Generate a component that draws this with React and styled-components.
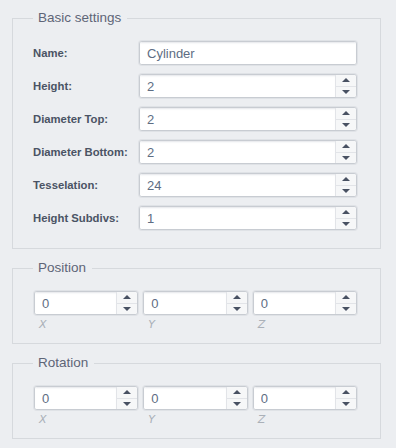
import React from "react";
import styled, { createGlobalStyle } from "styled-components";

const GlobalStyle = createGlobalStyle`
  html, body {
    margin: 0;
    padding: 0;
    background: #eceef1;
    font-family: "Liberation Sans", Arial, sans-serif;
  }
`;

const basicFields = [
  { label: "Name:", value: "Cylinder", spin: false },
  { label: "Height:", value: "2", spin: true },
  { label: "Diameter Top:", value: "2", spin: true },
  { label: "Diameter Bottom:", value: "2", spin: true },
  { label: "Tesselation:", value: "24", spin: true },
  { label: "Height Subdivs:", value: "1", spin: true },
];

const SpinBox = ({ value, spin = true }) => (
  <Box>
    <Field defaultValue={value} />
    {spin && (
      <Spinner>
        <SpinButton>
          <Arrow up />
        </SpinButton>
        <SpinButton>
          <Arrow />
        </SpinButton>
      </Spinner>
    )}
  </Box>
);

const VectorGroup = ({ title }) => (
  <Group>
    <Legend>{title}</Legend>
    <Triple>
      {["X", "Y", "Z"].map((axis) => (
        <Axis key={axis}>
          <SpinBox value="0" />
          <AxisLabel>{axis}</AxisLabel>
        </Axis>
      ))}
    </Triple>
  </Group>
);

const App = () => {
  return (
    <Page>
      <GlobalStyle />
      <Group>
        <Legend>Basic settings</Legend>
        <Rows>
          {basicFields.map((f) => (
            <Row key={f.label}>
              <Label>{f.label}</Label>
              <SpinBox value={f.value} spin={f.spin} />
            </Row>
          ))}
        </Rows>
      </Group>
      <VectorGroup title="Position" />
      <VectorGroup title="Rotation" />
    </Page>
  );
};

export default App;

const Page = styled.div`
  width: 396px;
  height: 448px;
  box-sizing: border-box;
  padding: 9px 15px 0 12px;
  display: flex;
  flex-direction: column;
  gap: 10px;
`;

const Group = styled.fieldset`
  margin: 0;
  border: 1px solid #d6d9dd;
  padding: 14px 23px 18px 20px;
  min-width: 0;
`;

const Legend = styled.legend`
  padding: 0 6px 0 5px;
  font-size: 13.5px;
  line-height: 18px;
  color: #5e6577;
`;

const Rows = styled.div`
  display: flex;
  flex-direction: column;
  gap: 9px;
`;

const Row = styled.div`
  display: grid;
  grid-template-columns: 106px minmax(0, 1fr);
  align-items: center;
`;

const Label = styled.label`
  font-size: 11.3px;
  font-weight: bold;
  color: #4a5364;
`;

const Box = styled.div`
  display: flex;
  height: 24px;
  box-sizing: border-box;
  border: 1px solid #c8ccd2;
  border-radius: 3px;
  box-shadow: 0 0 0 1px #dfe2e6;
  background: #fff;
  overflow: hidden;
`;

const Field = styled.input`
  flex: 1;
  width: 0;
  min-width: 0;
  border: none;
  outline: none;
  padding: 0 0 0 7px;
  font-family: "Liberation Sans", Arial, sans-serif;
  font-size: 13px;
  color: #5e6d83;
  background: #fff;
  box-shadow: inset 0 2px 2px -1px #e4e6ea;
`;

const Spinner = styled.div`
  width: 20px;
  display: flex;
  flex-direction: column;
  border-left: 1px solid #e2e4e8;
  background: #f6f7f8;
`;

const SpinButton = styled.div`
  flex: 1;
  display: flex;
  align-items: center;
  justify-content: center;
  & + & {
    border-top: 1px solid #e2e4e8;
  }
`;

const Arrow = styled.div`
  width: 0;
  height: 0;
  border-left: 4px solid transparent;
  border-right: 4px solid transparent;
  ${({ up }) =>
    up ? "border-bottom: 4px solid #485162;" : "border-top: 4px solid #485162;"}
`;

const Triple = styled.div`
  display: grid;
  grid-template-columns: repeat(3, minmax(0, 1fr));
  gap: 5px;
  padding-top: 0;
  margin-left: 1px;
  margin-bottom: -7px;
`;

const Axis = styled.div`
  display: flex;
  flex-direction: column;
`;

const AxisLabel = styled.span`
  font-family: "DejaVu Sans", sans-serif;
  font-style: italic;
  font-size: 11px;
  color: #aab0b8;
  padding: 3px 0 0 5px;
  line-height: 14px;
`;
